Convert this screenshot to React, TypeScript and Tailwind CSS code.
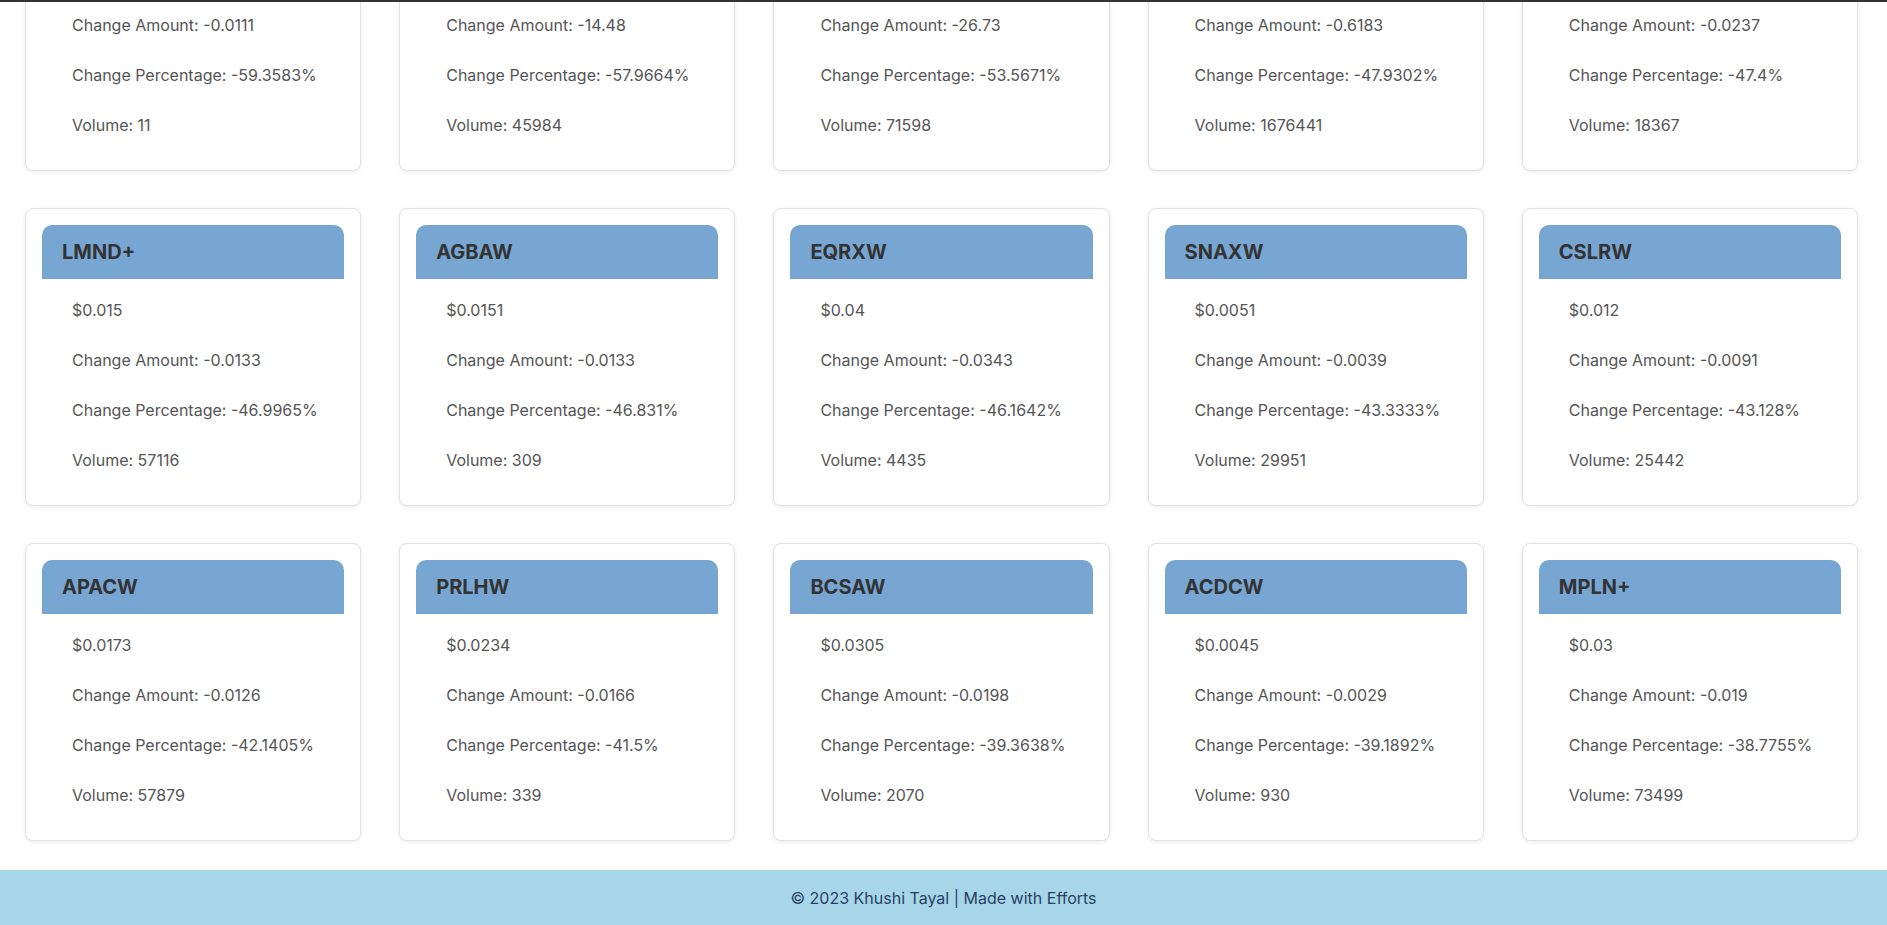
import React from "react";

type Stock = {
  ticker: string;
  price: string;
  changeAmount: string;
  changePercentage: string;
  volume: string;
};

const stocks: Stock[] = [
  { ticker: "SBEV+", price: "0.0076", changeAmount: "-0.0111", changePercentage: "-59.3583%", volume: "11" },
  { ticker: "NVAC", price: "10.5", changeAmount: "-14.48", changePercentage: "-57.9664%", volume: "45984" },
  { ticker: "CTM", price: "23.17", changeAmount: "-26.73", changePercentage: "-53.5671%", volume: "71598" },
  { ticker: "AREB", price: "0.6717", changeAmount: "-0.6183", changePercentage: "-47.9302%", volume: "1676441" },
  { ticker: "BRSHW", price: "0.0263", changeAmount: "-0.0237", changePercentage: "-47.4%", volume: "18367" },
  { ticker: "LMND+", price: "0.015", changeAmount: "-0.0133", changePercentage: "-46.9965%", volume: "57116" },
  { ticker: "AGBAW", price: "0.0151", changeAmount: "-0.0133", changePercentage: "-46.831%", volume: "309" },
  { ticker: "EQRXW", price: "0.04", changeAmount: "-0.0343", changePercentage: "-46.1642%", volume: "4435" },
  { ticker: "SNAXW", price: "0.0051", changeAmount: "-0.0039", changePercentage: "-43.3333%", volume: "29951" },
  { ticker: "CSLRW", price: "0.012", changeAmount: "-0.0091", changePercentage: "-43.128%", volume: "25442" },
  { ticker: "APACW", price: "0.0173", changeAmount: "-0.0126", changePercentage: "-42.1405%", volume: "57879" },
  { ticker: "PRLHW", price: "0.0234", changeAmount: "-0.0166", changePercentage: "-41.5%", volume: "339" },
  { ticker: "BCSAW", price: "0.0305", changeAmount: "-0.0198", changePercentage: "-39.3638%", volume: "2070" },
  { ticker: "ACDCW", price: "0.0045", changeAmount: "-0.0029", changePercentage: "-39.1892%", volume: "930" },
  { ticker: "MPLN+", price: "0.03", changeAmount: "-0.019", changePercentage: "-38.7755%", volume: "73499" },
];

const StockCard = ({ stock }: { stock: Stock }) => {
  return (
    <div className="rounded-lg border border-[#e2e2e2] bg-white p-4 shadow-[0_1px_4px_rgba(0,0,0,0.08)]">
      <div className="flex h-[54px] items-center rounded-t-[10px] bg-[#78a6d3] px-5">
        <h2 className="text-xl font-bold text-[#333]">{stock.ticker}</h2>
      </div>
      <div className="flex flex-col gap-[26px] pt-[19px] pb-[17px] pl-[30px] text-base leading-6 text-[#555]">
        <p>${stock.price}</p>
        <p>Change Amount: {stock.changeAmount}</p>
        <p>Change Percentage: {stock.changePercentage}</p>
        <p>Volume: {stock.volume}</p>
      </div>
    </div>
  );
};

export default function App() {
  return (
    <div className="flex h-screen flex-col bg-white font-['Inter',_'Noto_Sans',_sans-serif]">
      <div className="h-[2px] shrink-0 bg-[#333]" />
      <main className="min-h-0 flex-1 overflow-hidden">
        <div className="-mt-[129px] grid grid-cols-5 gap-x-[38px] gap-y-[37px] pl-[25px] pr-[29px]">
          {stocks.map((stock) => (
            <StockCard key={stock.ticker} stock={stock} />
          ))}
        </div>
      </main>
      <footer className="flex h-[55px] shrink-0 items-center justify-center bg-[#a6d6e7] text-base text-[#2c3e66]">
        © 2023 Khushi Tayal | Made with Efforts
      </footer>
    </div>
  );
}
